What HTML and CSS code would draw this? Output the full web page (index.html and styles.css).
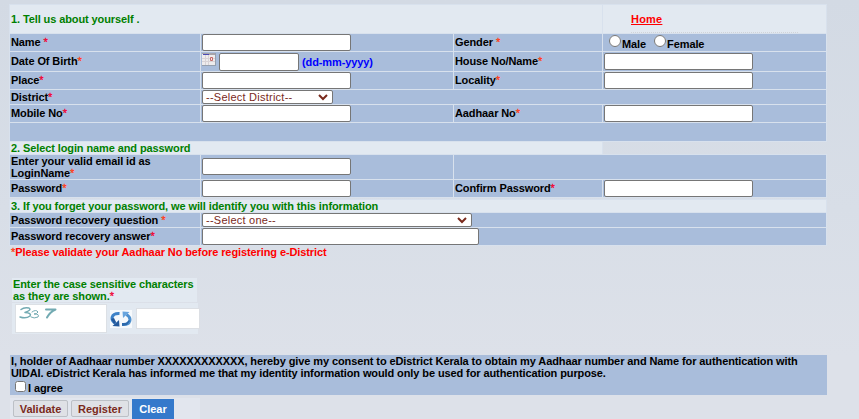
FILE: index.html
```html
<!DOCTYPE html>
<html lang="en">
<head>
<meta charset="utf-8">
<title>Registration</title>
<link rel="stylesheet" href="styles.css">
</head>
<body>
<form class="page">
  <div class="grid about">
    <div class="head span3">1. Tell us about yourself .</div>
    <div class="head home"><div class="dotted"><a href="#">Home</a></div></div>

    <div class="cell">Name&nbsp;<b>*</b></div>
    <div class="cell field"><input type="text"></div>
    <div class="cell">Gender&nbsp;<b class="o">*</b></div>
    <div class="cell gender"><input type="radio" name="g"><span>Male</span><input type="radio" name="g"><span>Female</span></div>

    <div class="cell">Date Of Birth<b class="o">*</b></div>
    <div class="cell field dob">
      <svg class="cal" width="14" height="13" viewBox="0 0 14 13"><path fill="#eeeced" d="M0 0h14v13H0z"/><path fill="#a6a4aa" d="M0 0h14v1H0zM7 1h7v1H7z"/><path fill="#4c4bb5" d="M1 1h6v1H1z"/><path stroke="#d8d3d6" d="M3.500 2v10M6.500 2v10M0 5.500h13M0 8.500h13"/><path stroke="#c56a68" fill="#f5e4e4" d="M8.500 4.500h2v3h-2z"/><path fill="#96a0ae" d="M0 12h14v1H0zM13 0h1v13h-1z"/></svg>
      <input class="date" type="text"><span class="hint">(dd-mm-yyyy)</span>
    </div>
    <div class="cell">House No/Name<b class="o">*</b></div>
    <div class="cell field"><input type="text"></div>

    <div class="cell">Place<b>*</b></div>
    <div class="cell field"><input type="text"></div>
    <div class="cell">Locality<b class="o">*</b></div>
    <div class="cell field"><input type="text"></div>

    <div class="cell short">District<b>*</b></div>
    <div class="cell field span3"><div class="select"><span>--Select District--</span><svg width="10" height="7" viewBox="0 0 10 7"><path d="M1 1l4 4 4-4" fill="none" stroke="#7a2a1c" stroke-width="2"/></svg></div></div>

    <div class="cell">Mobile No<b>*</b></div>
    <div class="cell field"><input type="text"></div>
    <div class="cell">Aadhaar No<b class="o">*</b></div>
    <div class="cell field"><input type="text"></div>

    <div class="cell span4"></div>

    <div class="head span3">2. Select login name and password</div>
    <div></div>

    <div class="cell two"><span>Enter your valid email id as<br>LoginName<b class="o">*</b></span></div>
    <div class="cell field mid"><input type="text"></div>
    <div class="cell span2"></div>

    <div class="cell">Password<b class="o">*</b></div>
    <div class="cell field"><input type="password"></div>
    <div class="cell">Confirm Password<b>*</b></div>
    <div class="cell field"><input type="password"></div>
  </div>

  <div class="grid recovery">
    <div class="head span4">3. If you forget your password, we will identify you with this information</div>
    <div class="cell short">Password recovery question&nbsp;<b class="o">*</b></div>
    <div class="cell field span3"><div class="select wide"><span>--Select one--</span><svg width="10" height="7" viewBox="0 0 10 7"><path d="M1 1l4 4 4-4" fill="none" stroke="#7a2a1c" stroke-width="2"/></svg></div></div>
    <div class="cell">Password recovery answer<b>*</b></div>
    <div class="cell field span3"><input class="answer" type="text"></div>
  </div>

  <p class="note"><b class="o">*</b>Please validate your Aadhaar No before registering e-District</p>

  <div class="captcha">
    <div class="caption">Enter the case sensitive characters<br>as they are shown.<b>*</b></div>
    <div class="challenge">
      <div class="image">
        <svg width="90" height="27" viewBox="0 0 90 27" fill="none" stroke="#72aab2" stroke-width="1.5" stroke-linecap="round" stroke-linejoin="round"><path d="M5 4.500Q8 2 13 3Q16 5 9 7.500Q16 8 14 11Q10 14 4 12"/><path stroke-width="1" d="M16 7Q20 4 22 7Q21 9 18 9Q24 9 22 12Q18 14 15 12"/><path stroke-width="2" d="M30 4.500h9.500Q34 7 31 12.500"/></svg>
      </div>
      <svg class="refresh" width="22" height="18" viewBox="0 0 22 18"><path fill="#f6f9fc" d="M0 0h22v18H0z"/><path fill="none" stroke="#3f83c8" stroke-width="3" d="M9.500 3.500C1 3 0 10 5.500 13.500"/><path fill="#24599c" d="M2.500 16L9.500 16.500 9 10zM1 9l3 5 2-2-2-4z"/><path fill="none" stroke="#4f91d0" stroke-width="3" d="M12.500 14.500C21 15 22 8 16.500 4.500"/><path fill="#69a5de" d="M19.500 2L12.500 1.500 13 8z"/><path fill="#2c68ab" d="M12 13h4l3-3 1 1-3 4-5 1z"/></svg>
      <input class="code" type="text">
    </div>
  </div>

  <div class="consent">
    <p>I, holder of Aadhaar number XXXXXXXXXXXX, hereby give my consent to eDistrict Kerala to obtain my Aadhaar number and Name for authentication with UIDAI. eDistrict Kerala has informed me that my identity information would only be used for authentication purpose.</p>
    <label><input type="checkbox"><span>I agree</span></label>
  </div>

  <div class="actions">
    <button type="button">Validate</button>
    <button type="button">Register</button>
    <button type="button" class="clear">Clear</button>
  </div>
</form>
</body>
</html>
```
FILE: styles.css
```css
* { box-sizing: border-box; }
html { height: 100%; background: linear-gradient(#d3dae4, #d8dee7 50%, #dde1e9 85%); }
body {
  margin: 0;
  height: 419px;
  overflow: hidden;
  font: bold 11px/12px "Liberation Sans", Arial, sans-serif;
  letter-spacing: -0.1px;
  color: #000;
}
.page { width: 817px; margin-left: 10px; padding-top: 5px; }
b { color: #f00030; font-weight: normal; -webkit-text-stroke: 0.3px; }
b.o { color: #ff3c14; }
.grid {
  display: grid;
  width: 816px;
  grid-template-columns: 190px 252px 148px 223px;
  gap: 1px;
}
.about { grid-template-rows: 28px 17px 19px 17px 14px 17px 18px 12px 24px 17px; }
.recovery { margin-top: 3px; grid-template-rows: 12px 14px 17px; }
.span2 { grid-column: span 2; }
.span3 { grid-column: span 3; }
.span4 { grid-column: span 4; }
.cell, .head {
  display: flex;
  align-items: center;
  padding-left: 1px;
  white-space: nowrap;
  min-height: 0;
  min-width: 0;
  box-shadow: 0 0 0 1px #d8e1ed;
}
.cell { background: #a9bddb; padding-bottom: 2px; }
.cell.two, .cell.short { padding-bottom: 0; }
.head { background: #e2e9f1; color: #008000; }
.home { align-items: stretch; padding: 0 28px; }
.dotted { flex: 1; display: flex; align-items: center; border-bottom: 1px dotted #d0d3d8; }
.dotted a { color: #f00; letter-spacing: 0.2px; }
.cell.field { align-items: flex-start; padding-bottom: 0; }
input[type="text"], input[type="password"] {
  width: 149px;
  height: 17px;
  margin: 0;
  padding: 0 2px;
  border: 1px solid #767676;
  border-radius: 2px;
  background: #fff;
}
.dob { padding-top: 1px; }
.dob + .cell + .field { padding-top: 1px; }
.cal { flex: none; }
.dob input.date { width: 80px; height: 18px; margin: 0 3px; }
.hint { color: #00f; margin-top: 3px; }
.cell.mid { padding-top: 3px; }
input.answer { width: 277px; }
.gender { padding-left: 6px; }
.gender input { width: 12px; height: 12px; margin: 0 1px 1px 0; }
.gender span { margin-top: 4px; margin-right: 8px; }
.select {
  width: 131px;
  height: 14px;
  display: flex;
  align-items: center;
  justify-content: space-between;
  padding: 0 4px 0 3px;
  border: 1px solid #767676;
  border-radius: 2px;
  background: #fff;
  color: #7a2a1c;
  font-weight: normal;
  letter-spacing: 0.24px;
}
.select.wide { width: 270px; }
.note { margin: 1px 0 0 1px; color: #f00; }
.captcha { margin: 20px 0 0 2px; width: 187px; }
.caption { width: 185px; height: 24px; padding-left: 1px; background: #e2e9f1; color: #008000; white-space: nowrap; }
.challenge { display: flex; align-items: center; width: 186px; height: 31px; margin-top: 1px; padding-left: 3px; background: #e2e9f1; }
.image { flex: none; width: 92px; height: 29px; border: 1px solid #dce0e5; background: #fff; }
.refresh { flex: none; margin: 0 4px 0 3px; }
.image svg { display: block; }
input.code[type="text"] { flex: none; width: 64px; height: 21px; border-color: #dcdfe4; border-radius: 0; }
.consent { height: 40px; margin-top: 21px; padding-left: 1px; background: #a9bddb; }
.consent p { margin: 0; }
.consent label { display: flex; align-items: center; padding-left: 4px; }
.consent label input { width: 11px; height: 11px; margin: 0 2px 1px 0; }
.consent label span { margin-top: 3px; }
.actions { display: flex; align-items: center; gap: 3px; width: 190px; height: 21px; margin-top: 3px; padding-left: 3px; background: #e2e6ee; }
.actions button {
  width: 55px;
  height: 17px;
  padding: 0;
  border: 1px solid #bcc0c6;
  border-radius: 2px;
  background: #dfe1e6;
  color: #7a2a1c;
  font: inherit;
}
.actions button:nth-child(2) { width: 58px; }
.actions button.clear { width: 42px; height: 20px; border: 0; border-radius: 0; background: #3479cb; color: #fff; }
```
